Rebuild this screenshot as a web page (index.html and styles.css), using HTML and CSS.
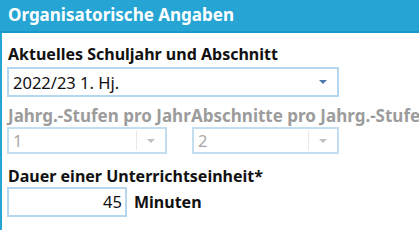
FILE: index.html
```html
<!DOCTYPE html>
<html lang="de">
<head>
<meta charset="utf-8">
<link rel="stylesheet" href="styles.css">
</head>
<body>
<div class="panel">
  <div class="header">Organisatorische Angaben</div>
  <div class="body">
    <div class="label">Aktuelles Schuljahr und Abschnitt</div>
    <div class="select wide">
      <span class="value">2022/23 1. Hj.</span>
      <span class="arrow"></span>
    </div>
    <div class="row">
      <div class="col col1">
        <div class="label muted">Jahrg.-Stufen pro Jahr</div>
        <div class="select disabled">
          <span class="value">1</span>
          <span class="sep"></span>
          <span class="arrow"></span>
        </div>
      </div>
      <div class="col col2">
        <div class="label muted">Abschnitte pro Jahrg.-Stufe</div>
        <div class="select disabled">
          <span class="value">2</span>
          <span class="sep"></span>
          <span class="arrow"></span>
        </div>
      </div>
    </div>
    <div class="label second">Dauer einer Unterrichtseinheit*</div>
    <div class="duration">
      <div class="input">45</div>
      <span class="unit">Minuten</span>
    </div>
  </div>
</div>
</body>
</html>
```

FILE: styles.css
```css
html, body {
  margin: 0;
  padding: 0;
  background: #ffffff;
  width: 419px;
  height: 230px;
  overflow: hidden;
  font-family: "Noto Sans", "Open Sans", sans-serif;
}
.panel {
  width: 419px;
  height: 230px;
}
.header {
  height: 33px;
  box-sizing: border-box;
  background: #26a5d5;
  border-bottom: 2px solid #1b97c8;
  color: #ffffff;
  font-weight: 700;
  font-size: 17px;
  line-height: 30px;
  padding-left: 8px;
  white-space: nowrap;
}
.body {
  border-left: 2px solid #26a5d5;
  height: 197px;
  box-sizing: border-box;
  padding: 10px 0 0 5px;
}
.label {
  font-weight: 700;
  font-size: 16px;
  line-height: 22px;
  color: #111111;
  white-space: nowrap;
  padding-left: 1px;
}
.label.muted {
  color: #9c9c9c;
  font-size: 17px;
}
.select {
  display: flex;
  align-items: center;
  box-sizing: border-box;
  border: 2px solid #b4d6ee;
  background: #ffffff;
  height: 30px;
}
.select.wide {
  width: 332px;
  margin-top: 2px;
}
.select .value {
  font-size: 16.5px;
  color: #111111;
  padding-left: 4px;
  flex: 1;
}
.select .arrow {
  width: 0;
  height: 0;
  border-left: 4px solid transparent;
  border-right: 4px solid transparent;
  border-top: 4px solid #4f77b0;
  margin-right: 10px;
}
.select.disabled {
  height: 27px;
  border-color: #c4def1;
}
.select.disabled .value {
  color: #a9a9a9;
}
.select.disabled .arrow {
  border-top-color: #c0c0c0;
}
.select .sep {
  width: 1px;
  align-self: stretch;
  margin: 2px 10px 2px 0;
  background: #e8e8e8;
}
.row {
  display: flex;
  margin-top: 8px;
}
.col1 {
  width: 183px;
}
.col1 .select {
  width: 160px;
}
.col2 .select {
  width: 147px;
  margin-left: 2px;
}
.label.second {
  margin-top: 11px;
}
.duration {
  display: flex;
  align-items: center;
}
.input {
  box-sizing: border-box;
  width: 120px;
  height: 30px;
  border: 2px solid #b4d6ee;
  font-size: 16.5px;
  color: #111111;
  text-align: right;
  line-height: 26px;
  padding-right: 3px;
}
.unit {
  font-weight: 700;
  font-size: 16px;
  color: #111111;
  margin-left: 7px;
}
```
